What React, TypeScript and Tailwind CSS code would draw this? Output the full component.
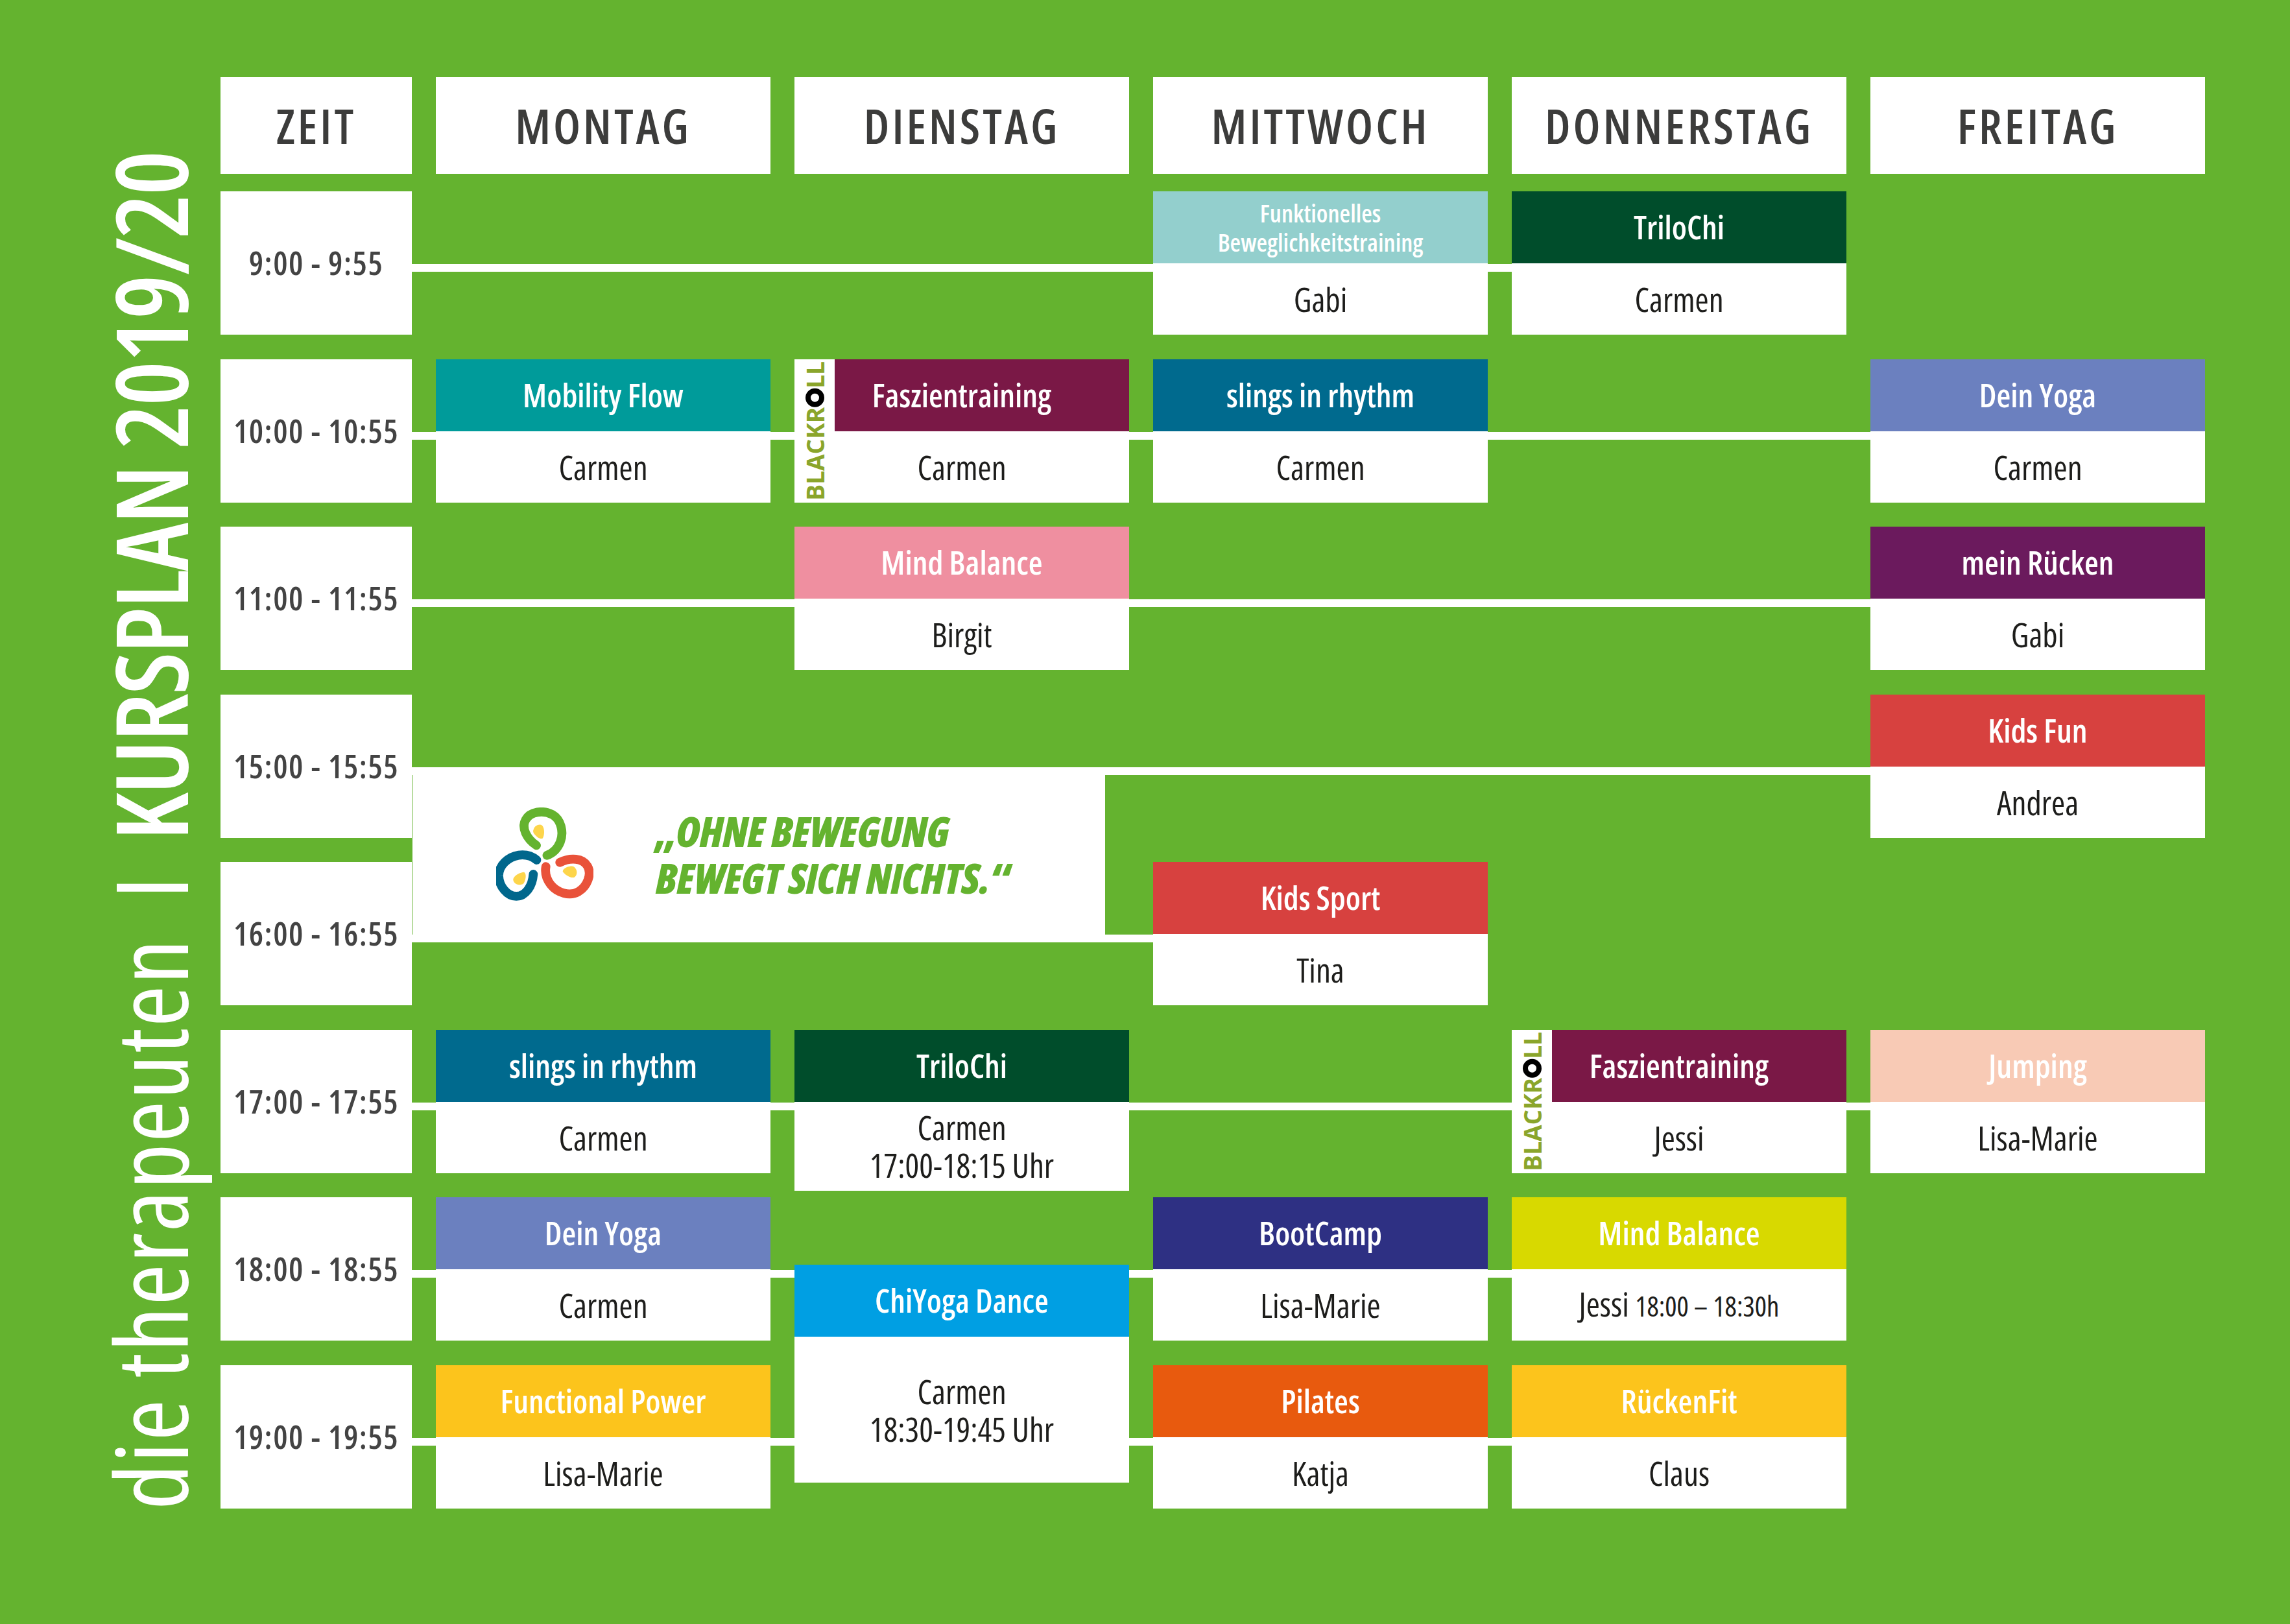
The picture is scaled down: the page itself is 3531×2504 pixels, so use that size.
import React from 'react';

type Course = {
  row: number;
  col: number;
  title: string;
  name: React.ReactNode;
  bg: string;
  blackroll?: boolean;
  small?: boolean;
  box?: string;
};

const colStart = ['col-start-1', 'col-start-2', 'col-start-3', 'col-start-4', 'col-start-5', 'col-start-6'];
const rowStart = ['', 'row-start-1', 'row-start-2', 'row-start-3', 'row-start-4', 'row-start-5', 'row-start-6', 'row-start-7', 'row-start-8'];
const colEnd = ['', '', 'col-end-3', 'col-end-4', 'col-end-5', 'col-end-6', 'col-end-7'];

const days = ['ZEIT', 'MONTAG', 'DIENSTAG', 'MITTWOCH', 'DONNERSTAG', 'FREITAG'];
const times = ['9:00 - 9:55', '10:00 - 10:55', '11:00 - 11:55', '15:00 - 15:55', '16:00 - 16:55', '17:00 - 17:55', '18:00 - 18:55', '19:00 - 19:55'];

// last day column (1 = Montag ... 5 = Freitag) reached by each row's line
const lineEnds = [4, 5, 5, 5, 3, 5, 4, 4];

const courses: Course[] = [
  { row: 1, col: 3, title: 'Funktionelles Beweglichkeitstraining', name: 'Gabi', bg: 'bg-[#93cfcd]', small: true },
  { row: 1, col: 4, title: 'TriloChi', name: 'Carmen', bg: 'bg-[#004d2b]' },
  { row: 2, col: 1, title: 'Mobility Flow', name: 'Carmen', bg: 'bg-[#009b9a]' },
  { row: 2, col: 2, title: 'Faszientraining', name: 'Carmen', bg: 'bg-[#7a1846]', blackroll: true },
  { row: 2, col: 3, title: 'slings in rhythm', name: 'Carmen', bg: 'bg-[#006a8e]' },
  { row: 2, col: 5, title: 'Dein Yoga', name: 'Carmen', bg: 'bg-[#6b80bf]' },
  { row: 3, col: 2, title: 'Mind Balance', name: 'Birgit', bg: 'bg-[#ef8fa0]' },
  { row: 3, col: 5, title: 'mein Rücken', name: 'Gabi', bg: 'bg-[#6b1a5d]' },
  { row: 4, col: 5, title: 'Kids Fun', name: 'Andrea', bg: 'bg-[#d7413f]' },
  { row: 5, col: 3, title: 'Kids Sport', name: 'Tina', bg: 'bg-[#d7413f]' },
  { row: 6, col: 1, title: 'slings in rhythm', name: 'Carmen', bg: 'bg-[#006a8e]' },
  {
    row: 6,
    col: 2,
    title: 'TriloChi',
    name: (
      <>
        Carmen
        <br />
        17:00-18:15 Uhr
      </>
    ),
    bg: 'bg-[#004d2b]',
    box: 'self-start h-[248px]',
  },
  { row: 6, col: 4, title: 'Faszientraining', name: 'Jessi', bg: 'bg-[#7a1846]', blackroll: true },
  { row: 6, col: 5, title: 'Jumping', name: 'Lisa-Marie', bg: 'bg-[#f8cab5]' },
  { row: 7, col: 1, title: 'Dein Yoga', name: 'Carmen', bg: 'bg-[#6b80bf]' },
  {
    row: 7,
    col: 2,
    title: 'ChiYoga Dance',
    name: (
      <>
        Carmen
        <br />
        18:30-19:45 Uhr
      </>
    ),
    bg: 'bg-[#009fe3]',
    box: 'row-span-2 self-start mt-[104px] h-[336px]',
  },
  { row: 7, col: 3, title: 'BootCamp', name: 'Lisa-Marie', bg: 'bg-[#2e3083]' },
  {
    row: 7,
    col: 4,
    title: 'Mind Balance',
    name: (
      <>
        Jessi <span className="text-[43px]">18:00 – 18:30h</span>
      </>
    ),
    bg: 'bg-[#d8d900]',
  },
  { row: 8, col: 1, title: 'Functional Power', name: 'Lisa-Marie', bg: 'bg-[#fcc41c]' },
  { row: 8, col: 3, title: 'Pilates', name: 'Katja', bg: 'bg-[#e85a0e]' },
  { row: 8, col: 4, title: 'RückenFit', name: 'Claus', bg: 'bg-[#fcc41c]' },
];

function Blackroll() {
  return (
    <div className="absolute inset-y-0 left-0 flex w-[62px] items-center justify-center overflow-hidden bg-white">
      <span className="rotate-180 whitespace-nowrap text-[37px] font-bold leading-none text-[#8aa52b] [font-stretch:100%] [writing-mode:vertical-rl]">
        BLACKR
        <span className="my-[1px] inline-block h-[29px] w-[29px] rounded-full border-[8px] border-black" />
        LL
      </span>
    </div>
  );
}

function Logo() {
  const swirl = 'M 268 243 C 222 212 196 160 218 122 C 240 84 300 76 342 98 C 385 122 398 182 380 228 C 366 262 340 282 318 290';
  const blob = 'M 255 168 C 260 150 282 140 296 150 C 308 165 306 195 298 210 C 286 216 270 204 262 194 C 252 184 251 176 255 168 Z';
  const parts: [string, number][] = [
    ['#64b32f', 0],
    ['#e9523a', 120],
    ['#00678c', 240],
  ];
  return (
    <svg viewBox="80 65 455 445" className="h-[146px] w-[150px] shrink-0">
      {parts.map(([color, a]) => (
        <g key={a} transform={`rotate(${a} 300 315)`}>
          <path d={swirl} fill="none" stroke={color} strokeWidth={42} strokeLinecap="round" />
          <path d={blob} fill="#fdd54b" />
        </g>
      ))}
    </svg>
  );
}

function CourseCard({ c }: { c: Course }) {
  return (
    <div className={`relative flex flex-col ${colStart[c.col]} ${rowStart[c.row]} ${c.box ?? ''}`}>
      <div
        className={`flex h-[111px] shrink-0 items-center justify-center px-4 text-center font-semibold text-white ${c.bg} ${
          c.small ? 'text-[38px] leading-[45px]' : 'text-[50px]'
        }`}
      >
        {c.title}
      </div>
      <div className="flex flex-1 items-center justify-center bg-white text-center text-[51px] leading-[58px] text-[#1d1d1b]">
        <div>{c.name}</div>
      </div>
      {c.blackroll && <Blackroll />}
    </div>
  );
}

export default function App() {
  return (
    <div className="flex h-[2504px] w-[3531px] bg-[#64b32f] font-['Open_Sans',sans-serif] [font-stretch:75%]">
      <div className="flex w-[340px] shrink-0 flex-col items-start justify-end pb-[176px] pl-[153px]">
        <div className="rotate-180 whitespace-nowrap text-[154px] leading-none text-white [writing-mode:vertical-rl]">
          <span className="font-normal tracking-[2px]">die therapeuten</span>
          <span className="ms-[60px] me-[56px] font-normal">I</span>
          <span className="font-semibold tracking-[-2px]">KURSPLAN 2019/20</span>
        </div>
      </div>

      <div className="flex flex-col pt-[119px]">
        <div className="grid h-[149px] grid-cols-[295px_repeat(5,516px)] gap-x-[37px]">
          {days.map((label) => (
            <div
              key={label}
              className="flex items-center justify-center bg-white text-[74px] font-semibold tracking-[4px] text-[#3c3c3b]"
            >
              {label}
            </div>
          ))}
        </div>

        <div className="mt-[27px] grid grid-cols-[295px_repeat(5,516px)] grid-rows-[repeat(8,221px)] gap-x-[37px] gap-y-[37.5px]">
          {lineEnds.map((end, i) => (
            <div key={`l${i}`} className={`col-start-1 ${colEnd[end + 1]} ${rowStart[i + 1]} mt-[112px] h-[12px] self-start bg-white`} />
          ))}

          {times.map((t, i) => (
            <div
              key={t}
              className={`col-start-1 ${rowStart[i + 1]} flex items-center justify-center bg-white text-[50px] font-semibold tracking-[1.5px] text-[#434343]`}
            >
              {t}
            </div>
          ))}

          <div className="col-span-2 col-start-2 row-span-2 row-start-4 ml-[-36px] mt-[112px] flex h-[270px] w-[1068px] items-center self-start justify-self-start bg-white pl-[129px]">
            <Logo />
            <p className="ml-[96px] whitespace-nowrap text-[64px] font-extrabold italic leading-[72px] tracking-[-0.5px] text-[#64b32f]">
              „OHNE BEWEGUNG
              <br />
              BEWEGT SICH NICHTS.“
            </p>
          </div>

          {courses.map((c, i) => (
            <CourseCard key={i} c={c} />
          ))}
        </div>
      </div>
    </div>
  );
}
